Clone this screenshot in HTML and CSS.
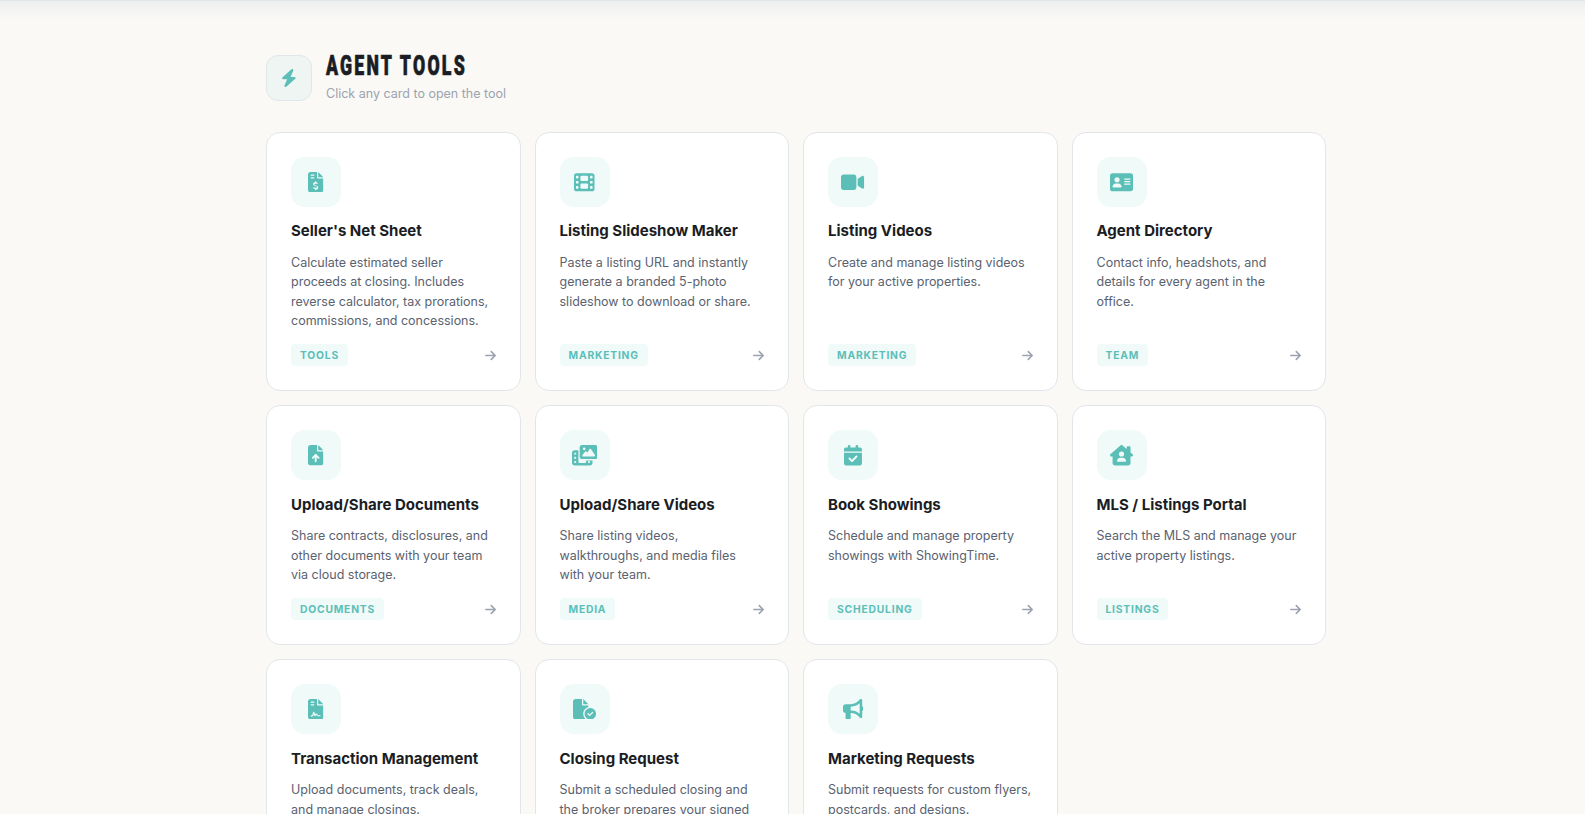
FILE: index.html
```html
<!DOCTYPE html>
<html lang="en">
<head>
    <meta charset="UTF-8">
    <meta name="viewport" content="width=device-width, initial-scale=1.0">
    <title>Agent Tools</title>
    <link rel="stylesheet" href="styles.css">
</head>
<body>

    <!-- Shared icons -->
    <svg class="sprite" aria-hidden="true">
        <symbol id="arrow" viewBox="0 0 448 512"><path d="M438.6 278.6c12.5-12.5 12.5-32.8 0-45.3l-160-160c-12.5-12.5-32.8-12.5-45.3 0s-12.5 32.8 0 45.3L338.8 224 32 224c-17.7 0-32 14.3-32 32s14.3 32 32 32l306.7 0L233.4 393.4c-12.5 12.5-12.5 32.8 0 45.3s32.8 12.5 45.3 0l160-160z"/></symbol>
        <symbol id="file" viewBox="0 0 384 512"><path d="M64 0C28.7 0 0 28.7 0 64V448c0 35.3 28.7 64 64 64H320c35.3 0 64-28.7 64-64V160H256c-17.7 0-32-14.3-32-32V0H64zM256 0V128H384L256 0z"/></symbol>
    </svg>

    <div class="topbar"></div>

    <div class="container">
        <!-- Section Header -->
        <div class="section-header">
            <div class="section-icon">
                <svg viewBox="0 0 448 512"><path d="M349.4 44.6c5.9-13.7 1.5-29.7-10.6-38.5s-28.6-8-39.9 1.8l-256 224c-10 8.8-13.6 22.9-8.9 35.3S50.7 288 64 288H175.5L98.6 467.4c-5.9 13.7-1.5 29.7 10.6 38.5s28.6 8 39.9-1.8l256-224c10-8.8 13.6-22.9 8.9-35.3s-16.6-20.7-30-20.7H272.5L349.4 44.6z"/></svg>
            </div>
            <div>
                <h1>Agent Tools</h1>
                <p>Click any card to open the tool</p>
            </div>
        </div>

        <!-- Tool Cards -->
        <div class="tools-grid">
            <a class="card">
                <div class="card-icon">
                    <svg viewBox="0 0 384 512">
                        <use href="#file"/>
                        <rect class="cut" x="64" y="64" width="96" height="32" rx="16"/>
                        <rect class="cut" x="64" y="128" width="96" height="32" rx="16"/>
                        <path class="cut" d="M192 232c8.800 0 16 7.200 16 16v17.300c8.500 1.200 16.700 3.100 24.100 5.100c8.500 2.300 13.600 11 11.300 19.600s-11 13.600-19.600 11.300c-11.100-3-22-5.200-32.100-5.300c-8.400-.1-17.400 1.800-23.600 5.500c-5.700 3.400-8.100 7.300-8.100 12.800c0 3.700 1.300 6.500 7.300 10.100c6.900 4.100 16.600 7.100 29.200 10.900l.5 .1c11.300 3.400 25.300 7.600 36.300 14.600c12.100 7.600 22.400 19.700 22.700 38.200c.3 19.300-9.600 33.300-22.900 41.600c-7.700 4.800-16.400 7.600-25.100 9.100V440c0 8.800-7.200 16-16 16s-16-7.200-16-16V422.200c-11.200-2.100-21.700-5.700-30.900-8.900c-2.100-.7-4.200-1.400-6.200-2.100c-8.400-2.800-12.900-11.900-10.100-20.200s11.900-12.900 20.200-10.100c2.500 .8 4.800 1.600 7.100 2.400c13.600 4.600 24.600 8.400 36.300 8.700c9.100 .3 17.900-1.700 23.700-5.300c5.100-3.200 7.900-7.300 7.800-14c-.1-4.600-1.800-7.800-7.700-11.600c-6.800-4.300-16.500-7.400-29-11.200l-1.600-.5c-11-3.300-24.300-7.300-34.800-13.700c-12-7.200-22.600-18.900-22.700-37.300c-.1-19.400 10.800-32.800 23.800-40.500c7.500-4.400 15.800-7.200 24.100-8.700V248c0-8.800 7.200-16 16-16z"/>
                    </svg>
                </div>
                <h3>Seller's Net Sheet</h3>
                <p>Calculate estimated seller proceeds at closing. Includes reverse calculator, tax prorations, commissions, and concessions.</p>
                <div class="card-footer"><span class="tag">Tools</span><svg class="arrow"><use href="#arrow"/></svg></div>
            </a>

            <a class="card">
                <div class="card-icon">
                    <svg viewBox="0 0 512 512">
                        <rect y="32" width="512" height="448" rx="64"/>
                        <g class="cut">
                            <rect x="48" y="96" width="64" height="64" rx="16"/>
                            <rect x="48" y="224" width="64" height="64" rx="16"/>
                            <rect x="48" y="352" width="64" height="64" rx="16"/>
                            <rect x="400" y="96" width="64" height="64" rx="16"/>
                            <rect x="400" y="224" width="64" height="64" rx="16"/>
                            <rect x="400" y="352" width="64" height="64" rx="16"/>
                            <rect x="160" y="96" width="192" height="128" rx="32"/>
                            <rect x="160" y="288" width="192" height="128" rx="32"/>
                        </g>
                    </svg>
                </div>
                <h3>Listing Slideshow Maker</h3>
                <p>Paste a listing URL and instantly generate a branded 5-photo slideshow to download or share.</p>
                <div class="card-footer"><span class="tag">Marketing</span><svg class="arrow"><use href="#arrow"/></svg></div>
            </a>

            <a class="card">
                <div class="card-icon">
                    <svg viewBox="0 0 576 512"><path d="M0 128C0 92.700 28.700 64 64 64H320c35.300 0 64 28.700 64 64V384c0 35.300-28.700 64-64 64H64c-35.300 0-64-28.700-64-64V128zM559.100 99.800c10.400 5.600 16.900 16.400 16.900 28.200V384c0 11.800-6.500 22.600-16.900 28.200s-23 5-32.900-1.600l-96-64L416 337.100V174.900l14.200-9.500 96-64c9.800-6.500 22.400-7.200 32.900-1.600z"/></svg>
                </div>
                <h3>Listing Videos</h3>
                <p>Create and manage listing videos for your active properties.</p>
                <div class="card-footer"><span class="tag">Marketing</span><svg class="arrow"><use href="#arrow"/></svg></div>
            </a>

            <a class="card">
                <div class="card-icon">
                    <svg viewBox="0 0 576 512">
                        <rect y="32" width="576" height="448" rx="64"/>
                        <g class="cut">
                            <circle cx="176" cy="192" r="64"/>
                            <path d="M144 288h64c44.200 0 80 35.800 80 80c0 8.800-7.200 16-16 16H80c-8.800 0-16-7.200-16-16c0-44.200 35.800-80 80-80z"/>
                            <rect x="352" y="160" width="160" height="32" rx="16"/>
                            <rect x="352" y="224" width="160" height="32" rx="16"/>
                            <rect x="352" y="288" width="160" height="32" rx="16"/>
                        </g>
                    </svg>
                </div>
                <h3>Agent Directory</h3>
                <p>Contact info, headshots, and details for every agent in the office.</p>
                <div class="card-footer"><span class="tag">Team</span><svg class="arrow"><use href="#arrow"/></svg></div>
            </a>

            <a class="card">
                <div class="card-icon">
                    <svg viewBox="0 0 384 512">
                        <use href="#file"/>
                        <path class="cut" d="M216 408c0 13.300-10.700 24-24 24s-24-10.700-24-24V305.900l-31 31c-9.400 9.400-24.600 9.400-33.900 0s-9.400-24.600 0-33.900l72-72c9.400-9.400 24.600-9.400 33.900 0l72 72c9.400 9.400 9.400 24.600 0 33.900s-24.600 9.400-33.900 0l-31-31V408z"/>
                    </svg>
                </div>
                <h3>Upload/Share Documents</h3>
                <p>Share contracts, disclosures, and other documents with your team via cloud storage.</p>
                <div class="card-footer"><span class="tag">Documents</span><svg class="arrow"><use href="#arrow"/></svg></div>
            </a>

            <a class="card">
                <div class="card-icon">
                    <svg viewBox="0 0 640 512">
                        <path d="M64 128h96v288c0 17.700 14.300 32 32 32h128c17.700 0 32-14.300 32-32v-32h160v64c0 35.300-28.700 64-64 64H64c-35.300 0-64-28.700-64-64V192c0-35.300 28.700-64 64-64z"/>
                        <rect x="192" width="448" height="352" rx="64"/>
                        <g class="cut">
                            <path d="M476 106.700C471.500 100 464 96 456 96s-15.500 4-20 10.700l-56 84L362.700 169c-4.600-5.700-11.500-9-18.700-9s-14.200 3.300-18.700 9l-64 80c-5.800 7.200-6.900 17.100-2.900 25.400s12.400 13.600 21.600 13.600h272c8.900 0 17-4.900 21.200-12.700s3.700-17.300-1.200-24.600l-96-144z"/>
                            <circle cx="304" cy="96" r="32"/>
                            <rect x="56" y="192" width="48" height="48" rx="16"/>
                            <rect x="56" y="296" width="48" height="48" rx="16"/>
                            <rect x="56" y="400" width="48" height="48" rx="16"/>
                            <rect x="400" y="400" width="48" height="48" rx="16"/>
                        </g>
                    </svg>
                </div>
                <h3>Upload/Share Videos</h3>
                <p>Share listing videos, walkthroughs, and media files with your team.</p>
                <div class="card-footer"><span class="tag">Media</span><svg class="arrow"><use href="#arrow"/></svg></div>
            </a>

            <a class="card">
                <div class="card-icon">
                    <svg viewBox="0 0 448 512"><path d="M128 0c17.700 0 32 14.300 32 32v32h128V32c0-17.700 14.300-32 32-32s32 14.300 32 32v32h48c26.500 0 48 21.500 48 48v48H0v-48C0 85.500 21.500 64 48 64h48V32c0-17.700 14.300-32 32-32zM0 192h448v272c0 26.500-21.500 48-48 48H48c-26.500 0-48-21.500-48-48V192zM329 305c9.400-9.400 9.400-24.600 0-33.900s-24.600-9.400-33.900 0l-95 95-47-47c-9.400-9.400-24.600-9.400-33.900 0s-9.400 24.600 0 33.900l64 64c9.400 9.400 24.600 9.400 33.900 0L329 305z"/></svg>
                </div>
                <h3>Book Showings</h3>
                <p>Schedule and manage property showings with ShowingTime.</p>
                <div class="card-footer"><span class="tag">Scheduling</span><svg class="arrow"><use href="#arrow"/></svg></div>
            </a>

            <a class="card">
                <div class="card-icon">
                    <svg viewBox="0 0 576 512"><path d="M575.800 255.500c0 18-15 32.100-32 32.100h-32l.7 160.200c.2 35.500-28.500 64.300-64 64.300H128.100c-35.300 0-64-28.700-64-64V287.600H32c-18 0-32-14-32-32.100c0-9 3-17 10-24L266.400 8c7-7 15-8 22-8s15 2 21 7L416 100.700V64c0-17.700 14.300-32 32-32h32c17.700 0 32 14.300 32 32V185l52.800 46.400c8 7 12 15 11 24zM352 224a64 64 0 1 0 -128 0 64 64 0 1 0 128 0zm-96 96c-44.200 0-80 35.800-80 80c0 8.800 7.200 16 16 16H384c8.800 0 16-7.200 16-16c0-44.200-35.800-80-80-80H256z"/></svg>
                </div>
                <h3>MLS / Listings Portal</h3>
                <p>Search the MLS and manage your active property listings.</p>
                <div class="card-footer"><span class="tag">Listings</span><svg class="arrow"><use href="#arrow"/></svg></div>
            </a>

            <a class="card">
                <div class="card-icon">
                    <svg viewBox="0 0 384 512">
                        <use href="#file"/>
                        <rect class="cut" x="64" y="64" width="96" height="32" rx="16"/>
                        <rect class="cut" x="64" y="128" width="96" height="32" rx="16"/>
                        <path class="scribble" d="M80 420h16c14 0 22-8 26-20l22-68 28 84 18-32c7-12 22-12 28 0 6 22 12 34 30 34h52"/>
                    </svg>
                </div>
                <h3>Transaction Management</h3>
                <p>Upload documents, track deals, and manage closings.</p>
            </a>

            <a class="card">
                <div class="card-icon">
                    <svg viewBox="0 0 576 512"><path d="M0 64C0 28.700 28.700 0 64 0H224v128c0 17.700 14.300 32 32 32h128v38.600C310.100 219.500 256 287.400 256 368c0 59.100 29.100 111.300 73.700 143.300c-3.200 .5-6.400 .7-9.700 .7H64c-35.300 0-64-28.700-64-64V64zm384 64H256V0L384 128zM288 368a144 144 0 1 1 288 0 144 144 0 1 1 -288 0zm211.300-43.300c-6.200-6.200-16.400-6.200-22.600 0L416 385.400l-28.700-28.700c-6.200-6.200-16.400-6.200-22.600 0s-6.200 16.400 0 22.600l40 40c6.200 6.200 16.400 6.200 22.600 0l72-72c6.200-6.200 6.200-16.400 0-22.600z"/></svg>
                </div>
                <h3>Closing Request</h3>
                <p>Submit a scheduled closing and the broker prepares your signed</p>
            </a>

            <a class="card">
                <div class="card-icon">
                    <svg viewBox="0 0 512 512"><path d="M480 32c0-12.900-7.800-24.600-19.800-29.600s-25.700-2.200-34.900 6.900L381.700 53c-48 48-113.100 75-181 75H64c-35.300 0-64 28.700-64 64v96c0 35.300 28.700 64 64 64v128c0 17.700 14.300 32 32 32h64c17.700 0 32-14.300 32-32V352h8.700c67.900 0 133 27 181 75l43.600 43.600c9.200 9.200 22.900 11.900 34.900 6.900s19.800-16.600 19.800-29.600V300.400c18.600-8.800 32-32.500 32-60.400s-13.400-51.600-32-60.400V32zm-64 76.700V371.300C357.200 317.800 280.500 288 200.700 288H192V192h8.700c79.800 0 156.500-29.800 215.300-83.300z"/></svg>
                </div>
                <h3>Marketing Requests</h3>
                <p>Submit requests for custom flyers, postcards, and designs.</p>
            </a>
        </div>
    </div>

</body>
</html>
```

FILE: styles.css
```css
* {
    box-sizing: border-box;
    margin: 0;
    padding: 0;
}
body {
    font-family: Inter, "Liberation Sans", sans-serif;
    background: linear-gradient(#eceeee, #f3f4f2 9px, #faf9f6 21px) no-repeat #faf9f6;
    color: #1a1d23;
    height: 100vh;
    overflow: hidden;
}
.sprite {
    display: none;
}
.topbar {
    height: 1px;
    background-color: #e0e5ea;
}
.container {
    width: 1060px;
    margin-left: 266px;
    padding-top: 51px;
}

/* Section Header */
.section-header {
    display: flex;
    align-items: center;
    gap: 14px;
    height: 52px;
    margin-bottom: 28px;
}
.section-icon {
    width: 46px;
    height: 46px;
    display: flex;
    align-items: center;
    justify-content: center;
    background-color: #eff5f3;
    border: 1px solid #e1e6ea;
    border-radius: 12px;
}
.section-icon svg {
    height: 18px;
    fill: #5bbfb8;
}
.section-header h1 {
    font-family: Roboto, sans-serif;
    font-size: 28.5px;
    font-weight: 900;
    line-height: 30px;
    letter-spacing: 3.6px;
    text-transform: uppercase;
    white-space: nowrap;
    transform: scaleX(0.62);
    transform-origin: left;
    -webkit-text-stroke: 0.7px #1a1d23;
}
.section-header p {
    font-size: 12.5px;
    line-height: 20px;
    margin-top: 3px;
    margin-bottom: 1px;
    color: #9ca3af;
}

/* Tool Cards */
.tools-grid {
    display: grid;
    grid-template-columns: repeat(4, 1fr);
    gap: 14px;
}
.card {
    display: flex;
    flex-direction: column;
    padding: 24px;
    background-color: #fff;
    border: 1px solid #e2e5ea;
    border-radius: 14px;
}
.card-icon {
    width: 50px;
    height: 50px;
    display: flex;
    align-items: center;
    justify-content: center;
    margin-bottom: 14.4px;
    background-color: #f0faf9;
    border-radius: 14px;
}
.card-icon svg {
    height: 20.5px;
    fill: #5bbfb8;
}
.card-icon .cut {
    fill: #f0faf9;
}
.card-icon .scribble {
    fill: none;
    stroke: #f0faf9;
    stroke-width: 30;
    stroke-linecap: round;
    stroke-linejoin: round;
}
.card h3 {
    font-size: 15px;
    font-weight: 700;
    line-height: 20px;
    margin-bottom: 11.6px;
}
.card p {
    flex: 1;
    font-size: 12.5px;
    line-height: 19.375px;
    color: #5a6270;
}
.card-footer {
    display: flex;
    align-items: center;
    justify-content: space-between;
    margin-top: 13.8px;
}
.tag {
    height: 22px;
    padding: 0 9px;
    font-size: 10.3px;
    font-weight: 700;
    line-height: 22px;
    letter-spacing: 0.8px;
    text-transform: uppercase;
    color: #5bbfb8;
    background-color: #f0faf9;
    border-radius: 4px;
}
.arrow {
    width: 11px;
    height: 13px;
    fill: #9ca3af;
}
```
